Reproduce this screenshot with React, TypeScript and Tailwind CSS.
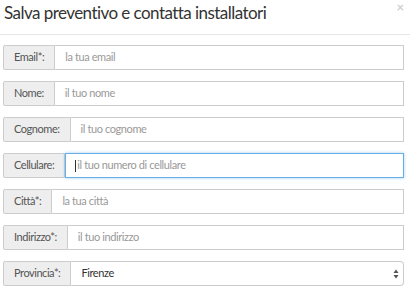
import React from "react";

const fields = [
  { label: "Email*:", placeholder: "la tua email" },
  { label: "Nome:", placeholder: "il tuo nome" },
  { label: "Cognome:", placeholder: "il tuo cognome" },
  { label: "Cellulare:", placeholder: "il tuo numero di cellulare", focus: true },
  { label: "Città*:", placeholder: "la tua città" },
  { label: "Indirizzo*:", placeholder: "il tuo indirizzo" },
];

const labelCls =
  "flex items-center px-[10px] bg-[#eeeeee] border border-[#cccccc] rounded-l-[2px] text-[11px] tracking-[-0.45px] text-[#555555] whitespace-nowrap";

const Row = ({ label, placeholder, focus }: { label: string; placeholder: string; focus?: boolean }) => (
  <div className="flex h-[25px]">
    <div className={labelCls}>{label}</div>
    {focus ? (
      <div className="flex-1 flex items-center pl-[9px] border border-[#66afe9] shadow-[0_0_3px_rgba(102,175,233,0.6)] text-[11px] tracking-[-0.4px] text-[#999999]">
        <span className="w-px h-[12px] bg-[#333333] mr-px" />
        {placeholder}
      </div>
    ) : (
      <div className="flex-1 flex items-center pl-[10px] border border-l-0 border-[#cccccc] text-[11px] tracking-[-0.4px] text-[#999999]">
        {placeholder}
      </div>
    )}
  </div>
);

export default function App() {
  return (
    <div className="w-[410px] h-[290px] bg-white overflow-hidden font-['Lato',sans-serif]">
      <div className="relative h-[35px] border-b border-[#e5e5e5] px-[4px] pt-[1px]">
        <h4 className="text-[17px] tracking-[-0.55px] leading-[24px] text-[#333333]">
          Salva preventivo e contatta installatori
        </h4>
        <span className="absolute right-[6px] top-[-2px] text-[13px] text-[#d0d0d0] font-bold">×</span>
      </div>
      <div className="flex flex-col gap-[11px] pt-[10px] pl-[3px] pr-[6px]">
        {fields.map((f) => (
          <Row key={f.label} {...f} />
        ))}
        <div className="flex h-[25px]">
          <div className={labelCls}>Provincia*:</div>
          <div className="flex-1 flex items-center justify-between pl-[10px] pr-[4px] border border-l-0 border-[#cccccc] rounded-r-[4px] text-[11px] tracking-[-0.4px] text-[#333333]">
            Firenze
            <svg width="6" height="10" viewBox="0 0 6 10">
              <path d="M3 0.5 L5.5 4 L0.5 4 Z" fill="#555" />
              <path d="M3 9.5 L5.5 6 L0.5 6 Z" fill="#555" />
            </svg>
          </div>
        </div>
      </div>
    </div>
  );
}
